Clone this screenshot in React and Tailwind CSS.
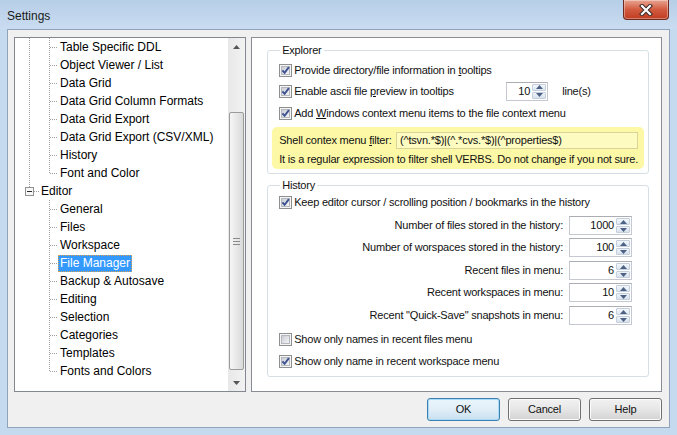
import React from "react";

const treeItems = [
  { label: "Table Specific DDL", kind: "a" },
  { label: "Object Viewer / List", kind: "a" },
  { label: "Data Grid", kind: "a" },
  { label: "Data Grid Column Formats", kind: "a" },
  { label: "Data Grid Export", kind: "a" },
  { label: "Data Grid Export (CSV/XML)", kind: "a" },
  { label: "History", kind: "a" },
  { label: "Font and Color", kind: "a", last: true },
  { label: "Editor", kind: "root" },
  { label: "General", kind: "b" },
  { label: "Files", kind: "b" },
  { label: "Workspace", kind: "b" },
  { label: "File Manager", kind: "b", selected: true },
  { label: "Backup & Autosave", kind: "b" },
  { label: "Editing", kind: "b" },
  { label: "Selection", kind: "b" },
  { label: "Categories", kind: "b" },
  { label: "Templates", kind: "b" },
  { label: "Fonts and Colors", kind: "b", last: true },
];

const historyRows = [
  { label: "Number of files stored in the history:", value: "1000", mt: "mt-[4px]" },
  { label: "Number of worspaces stored in the history:", value: "100", mt: "mt-[3px]" },
  { label: "Recent files in menu:", value: "6", mt: "mt-[4px]" },
  { label: "Recent workspaces in menu:", value: "10", mt: "mt-[3px]" },
  { label: 'Recent "Quick-Save" snapshots in menu:', value: "6", mt: "mt-[4px]" },
];

const LINE = "#a0a0a0";

const TreeGutter = ({ item }) => {
  if (item.kind === "root") {
    return (
      <svg width="24" height="18" className="shrink-0">
        <line x1="14.5" y1="0" x2="14.5" y2="5" stroke={LINE} strokeDasharray="1 1" />
        <rect x="10.5" y="5.5" width="8" height="8" fill="#f7f7f7" stroke="#919191" />
        <line x1="12" y1="9.5" x2="17" y2="9.5" stroke="#2d2d2d" />
        <line x1="19" y1="9.5" x2="24" y2="9.5" stroke={LINE} strokeDasharray="1 1" />
      </svg>
    );
  }
  return (
    <svg width="43" height="18" className="shrink-0">
      {item.kind === "a" && (
        <line x1="14.5" y1="0" x2="14.5" y2="18" stroke={LINE} strokeDasharray="1 1" />
      )}
      <line x1="34.5" y1="0" x2="34.5" y2={item.last ? 10 : 18} stroke={LINE} strokeDasharray="1 1" />
      <line x1="35" y1="9.5" x2="43" y2="9.5" stroke={LINE} strokeDasharray="1 1" />
    </svg>
  );
};

const Checkbox = ({ checked }) => (
  <svg width="13" height="13" viewBox="0 0 13 13" className="shrink-0">
    <defs>
      <linearGradient id="cbFill" x1="0" y1="0" x2="1" y2="1">
        <stop offset="0" stopColor="#c6cbd2" />
        <stop offset="1" stopColor="#f6f6f6" />
      </linearGradient>
    </defs>
    <rect x="0.5" y="0.5" width="12" height="12" fill="#f5f5f5" stroke="#8e8f8f" />
    <rect x="2.5" y="2.5" width="8" height="8" fill="url(#cbFill)" stroke="#b4b8be" />
    {checked && (
      <path d="M3.4 6.3 L5.6 8.8 L9.9 3.2" fill="none" stroke="#3d5191" strokeWidth="1.9" />
    )}
  </svg>
);

const Arrow = ({ up, color = "#4d6185" }) => (
  <svg width="7" height="4" viewBox="0 0 7 4">
    <path d={up ? "M0 4 L3.5 0 L7 4 Z" : "M0 0 L7 0 L3.5 4 Z"} fill={color} />
  </svg>
);

const Spin = ({ value, width }) => (
  <div className={`flex h-[19px] shrink-0 border border-[#c5c8d0] border-t-[#abadb3] bg-white ${width}`}>
    <div className="flex-1 pr-[2px] text-right leading-[17px]">{value}</div>
    <div className="my-[1px] mr-[1px] flex w-[14px] flex-col gap-px">
      <div className="flex flex-1 items-center justify-center rounded-[1px] border border-[#c3cfdc] bg-gradient-to-b from-[#f3f7fb] to-[#dde7f1]">
        <Arrow up />
      </div>
      <div className="flex flex-1 items-center justify-center rounded-[1px] border border-[#c3cfdc] bg-gradient-to-b from-[#eef3f8] to-[#d8e2ee]">
        <Arrow />
      </div>
    </div>
  </div>
);

const CheckRow = ({ checked, className, children }) => (
  <div className={`flex items-center gap-[2px] pl-[7px] ${className}`}>
    <Checkbox checked={checked} />
    <span className="whitespace-nowrap">{children}</span>
  </div>
);

const Button = ({ label, primary }) => (
  <div
    className={`flex h-[23px] w-[73px] items-center justify-center rounded-[3px] border bg-gradient-to-b ${
      primary
        ? "border-[#3c7fb1] from-[#eaf6fd] via-[#e0eef8] to-[#c9e0f0] shadow-[inset_0_0_0_1px_#a9dbf6]"
        : "border-[#707070] from-[#f2f2f2] via-[#e6e6e6] to-[#d2d2d2] shadow-[inset_0_0_0_1px_#fbfbfb]"
    }`}
  >
    {label}
  </div>
);

export default function App() {
  return (
    <div className="flex h-[435px] w-[677px] flex-col bg-[#c6daef] font-['Liberation_Sans',Arial,sans-serif] text-[11px] tracking-[-0.2px] text-[#111]">
      <div className="flex h-[29px] items-start justify-between bg-gradient-to-b from-[#b7cee8] to-[#c9dcf0]">
        <div className="pl-[7px] pt-[7px] text-[12px] tracking-normal text-[#1a1a1a]">Settings</div>
        <div className="mr-[8px] flex h-[20px] w-[46px] items-center justify-center rounded-b-[4px] border border-t-0 border-[#6e2a20] bg-gradient-to-b from-[#e8a492] via-[#d25a3f] to-[#c03c22] shadow-[inset_0_0_0_1px_rgba(255,255,255,0.35)]">
          <svg width="14" height="12" viewBox="0 0 14 12">
            <path d="M3 2 L11 10 M11 2 L3 10" stroke="#3a2a28" strokeWidth="4.2" strokeLinecap="square" />
            <path d="M3 2 L11 10 M11 2 L3 10" stroke="#ffffff" strokeWidth="2.2" strokeLinecap="square" />
          </svg>
        </div>
      </div>

      <div className="mx-[7px] mb-[7px] flex flex-1 flex-col border border-[#8fa3ba] bg-[#f0f0f0] pl-[6px] pr-[7px] pt-[7px]">
        <div className="flex h-[355px] gap-[5px]">
          {/* tree */}
          <div className="flex w-[236px] border border-[#828790] bg-white text-[12px] tracking-normal">
            <div className="flex-1 overflow-hidden">
              {treeItems.map((item) => (
                <div key={item.label} className="flex h-[18px] items-center">
                  <TreeGutter item={item} />
                  <span
                    className={`border px-[1px] leading-[15px] ${
                      item.selected
                        ? "border-dotted border-[#d9a050] bg-[#3399ff] text-white"
                        : "border-transparent text-black"
                    }`}
                  >
                    {item.label}
                  </span>
                </div>
              ))}
            </div>
            <div className="flex w-[17px] flex-col bg-gradient-to-r from-[#e8e8e8] to-[#f2f2f2]">
              <div className="flex h-[17px] items-center justify-center">
                <Arrow up color="#555555" />
              </div>
              <div className="h-[57px]" />
              <div className="mx-[1px] flex h-[258px] items-center justify-center rounded-[2px] border border-[#9b9b9b] bg-gradient-to-r from-[#f6f6f6] to-[#dadada]">
                <div className="flex flex-col gap-[2px]">
                  <div className="h-px w-[7px] bg-[#8a8a8a]" />
                  <div className="h-px w-[7px] bg-[#8a8a8a]" />
                  <div className="h-px w-[7px] bg-[#8a8a8a]" />
                </div>
              </div>
              <div className="flex-1" />
              <div className="flex h-[17px] items-center justify-center">
                <Arrow color="#555555" />
              </div>
            </div>
          </div>

          {/* page */}
          <div className="flex-1 border border-[#898c95] bg-white pl-[15px] pr-[12px] pt-[5px]">
            <fieldset className="rounded-[3px] border border-[#d5dfe5] px-[4px] pb-[4px]">
              <legend className="ml-[8px] px-[2px] leading-[14px]">Explorer</legend>
              <div className="pt-[3px]">
                <CheckRow checked className="h-[20px]">
                  Provide directory/file information in <u>t</u>ooltips
                </CheckRow>
                <div className="flex h-[22px] items-center pl-[7px]">
                  <div className="flex w-[227px] items-center gap-[2px]">
                    <Checkbox checked />
                    <span className="whitespace-nowrap">
                      Enable ascii file <u>p</u>review in tooltips
                    </span>
                  </div>
                  <Spin value="10" width="w-[42px]" />
                  <span className="ml-[14px]">line(s)</span>
                </div>
                <CheckRow checked className="h-[22px]">
                  Add <u>W</u>indows context menu items to the file context menu
                </CheckRow>
                <div className="mt-[3px] whitespace-nowrap rounded-[5px] bg-[#fcf8a6] pb-[3px] pl-[7px] pr-[6px] pt-[5px]">
                  <div className="flex h-[17px] items-center justify-between">
                    <span>
                      Shell contex menu <u>f</u>ilter:
                    </span>
                    <div className="h-[17px] w-[242px] shrink-0 border border-[#d8d49a] bg-[#fdfbc0] pl-[3px] leading-[15px]">
                      (^tsvn.*$)|(^.*cvs.*$)|(^properties$)
                    </div>
                  </div>
                  <div className="mt-[3px] leading-[14px]">
                    It is a regular expression to filter shell VERBS. Do not change if you not sure.
                  </div>
                </div>
              </div>
            </fieldset>

            <fieldset className="mt-[4px] rounded-[3px] border border-[#d5dfe5] px-[4px] pb-[5px]">
              <legend className="ml-[8px] px-[2px] leading-[14px]">History</legend>
              <CheckRow checked className="h-[20px]">
                Keep editor cursor / scrolling position / bookmarks in the history
              </CheckRow>
              {historyRows.map((row) => (
                <div key={row.label} className={`flex h-[19px] items-center justify-end gap-[6px] pr-[12px] ${row.mt}`}>
                  <span className="whitespace-nowrap">{row.label}</span>
                  <Spin value={row.value} width="w-[63px]" />
                </div>
              ))}
              <CheckRow className="mt-[4px] h-[20px]">Show only names in recent files menu</CheckRow>
              <CheckRow checked className="mt-[2px] h-[20px]">
                Show only name in recent workspace menu
              </CheckRow>
            </fieldset>
          </div>
        </div>

        <div className="mt-[6px] flex justify-end gap-[8px]">
          <Button label="OK" primary />
          <Button label="Cancel" />
          <Button label="Help" />
        </div>
      </div>
    </div>
  );
}
